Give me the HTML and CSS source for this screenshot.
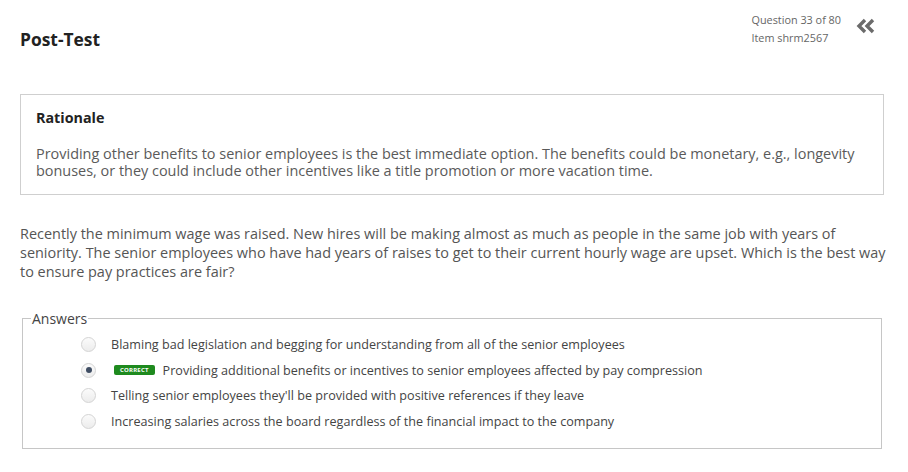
FILE: index.html
```html
<!DOCTYPE html>
<html>
<head>
<meta charset="utf-8">
<link rel="stylesheet" href="styles.css">
</head>
<body>
<div class="page">
  <header class="header">
    <h1 class="title">Post-Test</h1>
    <div class="meta">
      <div class="meta-text">
        <div>Question 33 of 80</div>
        <div>Item shrm2567</div>
      </div>
      <svg class="collapse" width="20" height="16" viewBox="0 0 20 16">
        <path d="M9 2 L3 8 L9 14" fill="none" stroke="#6b6b6b" stroke-width="3.4" stroke-linejoin="miter"/>
        <path d="M17 2 L11 8 L17 14" fill="none" stroke="#6b6b6b" stroke-width="3.4" stroke-linejoin="miter"/>
      </svg>
    </div>
  </header>

  <section class="rationale">
    <h2 class="rationale-title">Rationale</h2>
    <p class="rationale-text">Providing other benefits to senior employees is the best immediate option. The benefits could be monetary, e.g., longevity bonuses, or they could include other incentives like a title promotion or more vacation time.</p>
  </section>

  <p class="question">Recently the minimum wage was raised. New hires will be making almost as much as people in the same job with years of seniority. The senior employees who have had years of raises to get to their current hourly wage are upset. Which is the best way to ensure pay practices are fair?</p>

  <fieldset class="answers">
    <legend class="legend">Answers</legend>
    <ul class="answer-list">
      <li class="answer"><span class="radio"></span><span class="answer-text">Blaming bad legislation and begging for understanding from all of the senior employees</span></li>
      <li class="answer"><span class="radio checked"></span><span class="badge">CORRECT</span><span class="answer-text">Providing additional benefits or incentives to senior employees affected by pay compression</span></li>
      <li class="answer"><span class="radio"></span><span class="answer-text">Telling senior employees they'll be provided with positive references if they leave</span></li>
      <li class="answer"><span class="radio"></span><span class="answer-text">Increasing salaries across the board regardless of the financial impact to the company</span></li>
    </ul>
  </fieldset>
</div>
</body>
</html>
```

FILE: styles.css
```css
html, body {
  margin: 0;
  padding: 0;
  background: #ffffff;
}
body {
  font-family: "Open Sans", "Liberation Sans", sans-serif;
  color: #555555;
}
.page {
  width: 864px;
  padding: 0 24px 0 20px;
}
.header {
  display: flex;
  justify-content: space-between;
  align-items: flex-start;
  height: 94px;
}
.title {
  margin: 27px 0 0 0;
  font-size: 17.4px;
  font-weight: 700;
  color: #222222;
  line-height: 24px;
}
.meta {
  display: flex;
  align-items: flex-start;
  margin-top: 11px;
  margin-right: 8px;
}
.meta-text {
  font-size: 10.85px;
  line-height: 18px;
  color: #666666;
}
.collapse {
  margin-left: 15px;
  margin-top: 7px;
}
.rationale {
  border: 1px solid #cfcfcf;
  padding: 12px 15px 13px 15px;
  height: 74px;
}
.rationale-title {
  margin: 0;
  font-size: 14.3px;
  font-weight: 700;
  color: #222222;
  line-height: 22px;
}
.rationale-text {
  margin: 16px 0 0 0;
  font-size: 14.45px;
  line-height: 17px;
  color: #5a5a5a;
}
.question {
  margin: 29px -8px 0 0;
  font-size: 14.45px;
  line-height: 19px;
  color: #555555;
}
.answers {
  margin: 28px 2px 0 2px;
  border: 1px solid #c6c6c6;
  padding: 4px 10px 14px 10px;
}
.legend {
  font-size: 14px;
  color: #444444;
  padding: 0 1px;
  margin-left: -2px;
}
.answer-list {
  list-style: none;
  margin: 0;
  padding: 0 0 0 48px;
}
.answer {
  display: flex;
  align-items: center;
  height: 25.5px;
  font-size: 12.6px;
  color: #444444;
}
.radio {
  width: 13px;
  height: 13px;
  border: 1px solid #d4d4d4;
  border-radius: 50%;
  background: linear-gradient(#fbfbfb, #ececec);
  margin-right: 15px;
  position: relative;
  flex: none;
}
.radio.checked::after {
  content: "";
  position: absolute;
  left: 3.5px;
  top: 3.5px;
  width: 6px;
  height: 6px;
  border-radius: 50%;
  background: #3f4d63;
}
.badge {
  background: #1e8a1e;
  color: #ffffff;
  font-size: 6px;
  font-weight: 700;
  line-height: 10px;
  padding: 0 6px;
  border-radius: 2px;
  margin-right: 8px;
  margin-left: 3px;
  letter-spacing: 0.2px;
}
```
